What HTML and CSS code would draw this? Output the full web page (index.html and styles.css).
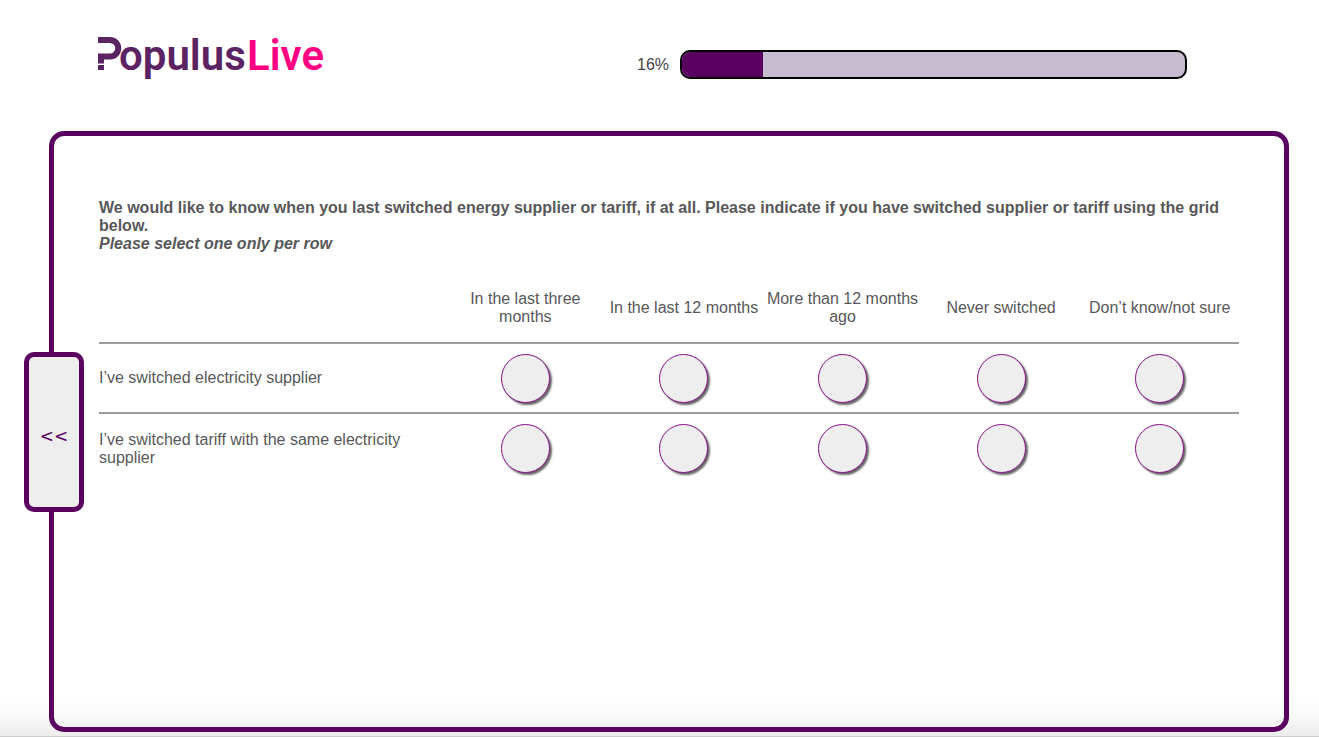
FILE: index.html
```html
<!DOCTYPE html>
<html lang="en">
<head>
<meta charset="utf-8">
<meta name="viewport" content="width=device-width, initial-scale=1">
<title>PopulusLive survey</title>
<link rel="stylesheet" href="styles.css">
</head>
<body>
<header class="header">
  <svg class="logo" viewBox="0 0 232 50" role="img" aria-label="PopulusLive">
    <path class="logo-mark" d="M0 5H12A8 8 0 0 1 12 21.500H3V28.500"/>
    <path class="logo-dot" d="M0 30H6V35H0Z"/>
    <text class="logo-name" x="21" y="35">opulus</text>
    <text class="logo-live" x="149" y="35">Live</text>
  </svg>
  <div class="progress">
    <span id="progress-label">16%</span>
    <div class="progress-track" role="progressbar" aria-labelledby="progress-label" aria-valuenow="16" aria-valuemin="0" aria-valuemax="100">
      <div class="progress-fill" style="width:16%"></div>
    </div>
  </div>
</header>
<main class="panel">
  <button class="previous" type="button" aria-label="Previous">&lt;&lt;</button>
  <form>
    <p class="question">We would like to know when you last switched energy supplier or tariff, if at all. Please indicate if you have switched supplier or tariff using the grid below.<br><em>Please select one only per row</em></p>
    <table class="grid">
      <thead>
        <tr>
          <td class="row-label"></td>
          <th scope="col">In the last three months</th>
          <th scope="col">In the last 12 months</th>
          <th scope="col">More than 12 months ago</th>
          <th scope="col">Never switched</th>
          <th scope="col">Don’t know/not sure</th>
        </tr>
      </thead>
      <tbody>
        <tr>
          <th class="row-label" scope="row">I’ve switched electricity supplier</th>
          <td><input type="radio" name="supplier" value="1" aria-label="In the last three months"></td>
          <td><input type="radio" name="supplier" value="2" aria-label="In the last 12 months"></td>
          <td><input type="radio" name="supplier" value="3" aria-label="More than 12 months ago"></td>
          <td><input type="radio" name="supplier" value="4" aria-label="Never switched"></td>
          <td><input type="radio" name="supplier" value="5" aria-label="Don’t know/not sure"></td>
        </tr>
        <tr>
          <th class="row-label" scope="row">I’ve switched tariff with the same electricity supplier</th>
          <td><input type="radio" name="tariff" value="1" aria-label="In the last three months"></td>
          <td><input type="radio" name="tariff" value="2" aria-label="In the last 12 months"></td>
          <td><input type="radio" name="tariff" value="3" aria-label="More than 12 months ago"></td>
          <td><input type="radio" name="tariff" value="4" aria-label="Never switched"></td>
          <td><input type="radio" name="tariff" value="5" aria-label="Don’t know/not sure"></td>
        </tr>
      </tbody>
    </table>
  </form>
</main>
</body>
</html>
```
FILE: styles.css
```css
* {
  box-sizing: border-box;
}

body {
  display: flex;
  flex-direction: column;
  min-height: 100vh;
  margin: 0;
  padding-bottom: 4px;
  border-bottom: 1px solid #ccc;
  background: linear-gradient(to top, #ebebeb, #f9f9f9 20px, #fff 44px);
  color: #58585a;
  font: 16px/18px "Liberation Sans", Arial, sans-serif;
}

.header {
  display: flex;
  justify-content: space-between;
  align-items: flex-start;
  gap: 24px;
  padding: 35px 132px 46px 98px;
}

.logo {
  width: 232px;
  height: 50px;
  overflow: visible;
}

.logo-mark {
  fill: none;
  stroke: #5c2363;
  stroke-width: 6;
}

.logo-dot {
  fill: #5c2363;
}

.logo-name,
.logo-live {
  font-family: Roboto, sans-serif;
  font-size: 42px;
  font-weight: 600;
  fill: #5c2363;
}

.logo-live {
  fill: #ff0083;
}

.progress {
  display: flex;
  align-items: center;
  gap: 11px;
  flex: 0 1 550px;
  padding-top: 15px;
  color: #444;
}

.progress-track {
  flex: 1;
  height: 29px;
  border: 2px solid #000;
  border-radius: 10px;
  background: #c6bcd0;
  overflow: hidden;
}

.progress-fill {
  height: 100%;
  background: #590060;
}

.panel {
  position: relative;
  flex: 1;
  margin: 0 30px 0 49px;
  padding: 63px 45px;
  border: 5px solid #590060;
  border-radius: 15px;
}

.previous {
  position: absolute;
  top: 50%;
  left: 0;
  transform: translate(-50%, -50%);
  width: 60px;
  height: 160px;
  padding: 8px 0 0;
  border: 5px solid #590060;
  border-radius: 10px;
  background: #eee;
  color: #590060;
  font: 17px/18px "DejaVu Sans", sans-serif;
}

.question {
  margin: 0 0 20px;
  font-weight: bold;
}

.grid {
  width: 100%;
  table-layout: fixed;
  border-collapse: collapse;
}

.grid th,
.grid td {
  height: 70px;
  padding: 0 3px;
  font-weight: normal;
  text-align: center;
  vertical-align: middle;
}

.grid tr + tr,
.grid tbody tr {
  border-top: 2px solid #9c9c9c;
}

.grid .row-label {
  width: 347px;
  padding-left: 0;
  text-align: left;
}

.grid input {
  display: block;
  appearance: none;
  width: 49px;
  height: 49px;
  margin: 0 auto;
  border: 1px solid #8b0f8b;
  border-radius: 50%;
  background: #eee;
  box-shadow: 2px 2px 2px #666;
}

.grid input:checked {
  background: #590060;
}
```
